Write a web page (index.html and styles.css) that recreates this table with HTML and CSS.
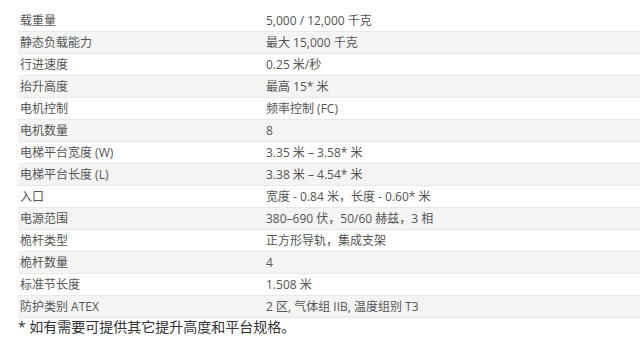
FILE: index.html
```html
<!DOCTYPE html>
<html lang="zh">
<head>
<meta charset="utf-8">
<link rel="stylesheet" href="styles.css">
</head>
<body>
<div class="page">
  <table class="specs">
    <tbody>
      <tr><td class="label">载重量</td><td class="value">5,000 / 12,000 千克</td></tr>
      <tr><td class="label">静态负载能力</td><td class="value">最大 15,000 千克</td></tr>
      <tr><td class="label">行进速度</td><td class="value">0.25 米/秒</td></tr>
      <tr><td class="label">抬升高度</td><td class="value">最高 15* 米</td></tr>
      <tr><td class="label">电机控制</td><td class="value">频率控制 (FC)</td></tr>
      <tr><td class="label">电机数量</td><td class="value">8</td></tr>
      <tr><td class="label">电梯平台宽度 (W)</td><td class="value">3.35 米 – 3.58* 米</td></tr>
      <tr><td class="label">电梯平台长度 (L)</td><td class="value">3.38 米 – 4.54* 米</td></tr>
      <tr><td class="label">入口</td><td class="value">宽度 - 0.84 米，长度 - 0.60* 米</td></tr>
      <tr><td class="label">电源范围</td><td class="value">380–690 伏，50/60 赫兹，3 相</td></tr>
      <tr><td class="label">桅杆类型</td><td class="value">正方形导轨，集成支架</td></tr>
      <tr><td class="label">桅杆数量</td><td class="value">4</td></tr>
      <tr><td class="label">标准节长度</td><td class="value">1.508 米</td></tr>
      <tr><td class="label">防护类别 ATEX</td><td class="value">2 区, 气体组 IIB, 温度组别 T3</td></tr>
    </tbody>
  </table>
  <p class="note">* 如有需要可提供其它提升高度和平台规格。</p>
</div>
</body>
</html>
```

FILE: styles.css
```css
html, body {
  margin: 0;
  padding: 0;
  background: #ffffff;
}

.page {
  padding: 10px 0 0 18px;
  font-family: "Open Sans", "Noto Sans CJK SC", sans-serif;
}

.specs {
  width: 640px;
  border-collapse: collapse;
  font-size: 12px;
  color: #555555;
}

.specs td {
  height: 21px;
  padding: 0 2px;
  line-height: 21px;
  border-bottom: 1px solid #e8e8e8;
  white-space: nowrap;
}

.specs tr:nth-child(even) td {
  background: #f4f4f4;
}

.specs .label {
  width: 242px;
}

.note {
  margin: 0;
  font-size: 14px;
  line-height: 18px;
  color: #333333;
}
```
